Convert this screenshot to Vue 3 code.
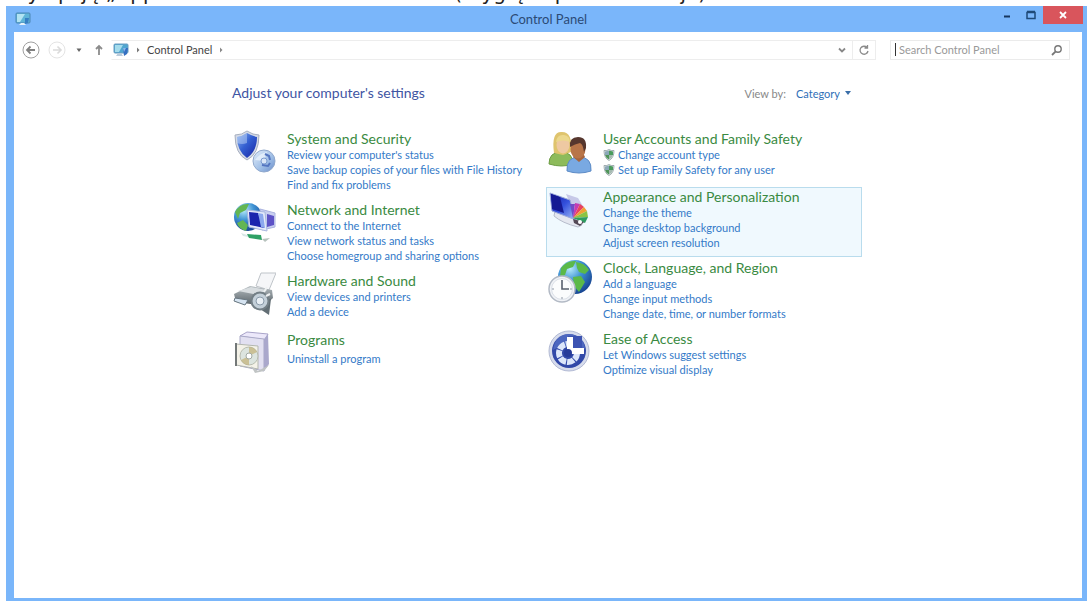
<script setup>
import { ref } from 'vue'

const query = ref('')
const view = ref('Category')

const columns = [
  [
    { icon: 'security', title: 'System and Security', links: ["Review your computer's status", 'Save backup copies of your files with File History', 'Find and fix problems'] },
    { icon: 'network', title: 'Network and Internet', links: ['Connect to the Internet', 'View network status and tasks', 'Choose homegroup and sharing options'] },
    { icon: 'hardware', title: 'Hardware and Sound', links: ['View devices and printers', 'Add a device'] },
    { icon: 'programs', title: 'Programs', links: ['Uninstall a program'] }
  ],
  [
    { icon: 'users', title: 'User Accounts and Family Safety', shield: true, links: ['Change account type', 'Set up Family Safety for any user'] },
    { icon: 'appearance', title: 'Appearance and Personalization', active: true, links: ['Change the theme', 'Change desktop background', 'Adjust screen resolution'] },
    { icon: 'clock', title: 'Clock, Language, and Region', links: ['Add a language', 'Change input methods', 'Change date, time, or number formats'] },
    { icon: 'ease', title: 'Ease of Access', links: ['Let Windows suggest settings', 'Optimize visual display'] }
  ]
]
</script>

<template>
  <div class="page">
    <svg class="defs" width="0" height="0" aria-hidden="true">
      <defs>
        <linearGradient id="gBlue" x1="0" y1="0" x2="1" y2="1">
          <stop offset="0" stop-color="#8fb4ee" /><stop offset=".45" stop-color="#3460d2" /><stop offset="1" stop-color="#1522a4" />
        </linearGradient>
        <radialGradient id="gGlobe" cx=".35" cy=".25" r=".8">
          <stop offset="0" stop-color="#b8ecfa" /><stop offset=".45" stop-color="#3f93d4" /><stop offset="1" stop-color="#15418f" />
        </radialGradient>
        <linearGradient id="gDisk" x1="0" y1="0" x2="1" y2="1">
          <stop offset="0" stop-color="#e6f0fb" /><stop offset=".6" stop-color="#9dbde6" /><stop offset="1" stop-color="#6a8cc8" />
        </linearGradient>
        <linearGradient id="gScreen" x1="0" y1="0" x2="1" y2="1">
          <stop offset="0" stop-color="#1018a0" /><stop offset=".5" stop-color="#3552dd" /><stop offset="1" stop-color="#a9c4f7" />
        </linearGradient>
        <linearGradient id="gGrey" x1="0" y1="0" x2="0" y2="1">
          <stop offset="0" stop-color="#b4bcc0" /><stop offset="1" stop-color="#566066" />
        </linearGradient>
      </defs>
    </svg>

    <p class="caption">my opcję „Appearance and Personalization” (Wygląd i personalizacja).</p>

    <div class="window">
      <header class="titlebar">
        <svg class="app-icon" viewBox="0 0 16 16" aria-hidden="true">
          <rect x="1" y="2" width="14" height="10" rx="1" fill="#5fb4d8" stroke="#4b86b4" />
          <path d="M2 3h8l-5 8H2z" fill="#b2e3f2" />
          <path d="M4 14h7l-2-2H6z" fill="#e6f2fa" />
          <path d="M10 7h4l-1 5-3 1z" fill="#377fc4" />
        </svg>
        <h1>Control Panel</h1>
        <div class="controls">
          <button type="button" aria-label="Minimize"><svg viewBox="0 0 12 12"><path d="M3 7.5h6" stroke="#17375e" stroke-width="2" /></svg></button>
          <button type="button" aria-label="Maximize"><svg viewBox="0 0 12 12"><path d="M2 3.5h8v6H2zM2 2.5h8" fill="none" stroke="#1f4a78" stroke-width="1.5" /></svg></button>
          <button type="button" class="close" aria-label="Close"><svg viewBox="0 0 12 12"><path d="M3 3l6 6M9 3l-6 6" stroke="#fff" stroke-width="1.8" /></svg></button>
        </div>
      </header>

      <div class="body">
        <nav class="navbar" aria-label="Location">
          <button type="button" class="round" aria-label="Back">
            <svg viewBox="0 0 18 18"><circle cx="9" cy="9" r="8" fill="#fff" stroke="#a0a0a0" /><path d="M5 9h8M8.5 5.5L5 9l3.5 3.5" fill="none" stroke="#808080" stroke-width="1.8" /></svg>
          </button>
          <button type="button" class="round" aria-label="Forward" disabled>
            <svg viewBox="0 0 18 18"><circle cx="9" cy="9" r="8" fill="#fff" stroke="#e4e4e4" /><path d="M5 9h8M9.5 5.5L13 9l-3.5 3.5" fill="none" stroke="#dadada" stroke-width="1.6" /></svg>
          </button>
          <button type="button" class="small" aria-label="Recent locations"><svg viewBox="0 0 8 8"><path d="M1.5 2.5h5L4 6z" fill="#666" /></svg></button>
          <button type="button" class="up" aria-label="Up"><svg viewBox="0 0 12 12"><path d="M6 11V2M3 5l3-3 3 3" fill="none" stroke="#8c8c8c" stroke-width="1.8" /></svg></button>
          <div class="address">
            <svg class="place" viewBox="0 0 16 16" aria-hidden="true">
              <rect x="1" y="2" width="14" height="9" rx="1" fill="#4fa6d0" stroke="#6a9cc0" />
              <path d="M2 3h8l-4 7H2z" fill="#a5dcec" />
              <path d="M3 14h7l-2-3H5z" fill="#b9cbdb" />
              <path d="M10 6h5l-1 6-3 2z" fill="#356fc0" /><path d="M10 6h3l-2 4z" fill="#8ab8ea" />
            </svg>
            <svg class="chev" viewBox="0 0 8 8" aria-hidden="true"><path d="M3 1.5L5.5 4 3 6.5z" fill="#777" /></svg>
            <a href="#">Control Panel</a>
            <svg class="chev" viewBox="0 0 8 8" aria-hidden="true"><path d="M3 1.5L5.5 4 3 6.5z" fill="#888" /></svg>
            <button type="button" class="drop" aria-label="Previous locations"><svg viewBox="0 0 12 12"><path d="M3 4.5l3 3 3-3" fill="none" stroke="#888" stroke-width="1.8" /></svg></button>
            <button type="button" class="refresh" aria-label="Refresh"><svg viewBox="0 0 12 12"><path d="M9 3.5A4 4 0 1 0 10 7M9.5 1v3H6.5" fill="none" stroke="#8b8b8b" stroke-width="1.3" /></svg></button>
          </div>
          <label class="search">
            <span class="caret" aria-hidden="true"></span>
            <input v-model="query" type="text" placeholder="Search Control Panel" aria-label="Search Control Panel" />
            <svg viewBox="0 0 12 12" aria-hidden="true"><circle cx="7" cy="5" r="3.2" fill="none" stroke="#777" stroke-width="1.4" /><path d="M4.7 7.3L1 11" stroke="#777" stroke-width="1.8" /></svg>
          </label>
        </nav>

        <main>
          <div class="heading">
            <h2>Adjust your computer's settings</h2>
            <label class="viewby">
              <span>View by:</span>
              <span class="pick">
                <select v-model="view">
                  <option>Category</option>
                  <option>Large icons</option>
                  <option>Small icons</option>
                </select>
                <svg viewBox="0 0 8 8" aria-hidden="true"><path d="M1 2h6L4 6z" fill="#3a6ea8" /></svg>
              </span>
            </label>
          </div>

          <div class="columns">
            <div v-for="(items, c) in columns" :key="c" class="column">
              <section v-for="item in items" :key="item.title" class="item" :class="{ active: item.active, single: item.links.length === 1 }">
                <svg class="icon" viewBox="0 0 44 44" aria-hidden="true">
                  <g v-if="item.icon === 'security'">
                    <path d="M3 5q7 0 12-4 6 4 12 4 0 19-12 25Q3 24 3 5z" fill="#d5dbe6" stroke="#a7afc0" />
                    <path d="M5 7q6-1 10-4 5 3 10 4 0 14-10 21Q5 21 5 7z" fill="url(#gBlue)" />
                    <path d="M5 7q6-1 10-4v10Q10 15 5 13z" fill="#b9d2f5" opacity=".5" />
                    <circle cx="32" cy="31" r="11" fill="url(#gDisk)" stroke="#91a9cd" />
                    <path d="M23 30q5-7 12-8l-3 9z" fill="#e8f2fd" opacity=".8" />
                    <circle cx="32" cy="31" r="3" fill="#d9e6f7" stroke="#7b9bd0" />
                    <path d="M33 24l4 2 1 4M30 35l6 1 2-3" fill="none" stroke="#5375c0" stroke-width="2" />
                  </g>
                  <g v-else-if="item.icon === 'network'">
                    <circle cx="16" cy="16" r="14" fill="url(#gGlobe)" />
                    <path d="M3 11Q8 2 17 3l-3 6-6 3-2 6zM5 22l6-3 5 5-2 6Q7 28 5 22z" fill="#63b653" />
                    <path d="M28 8l15 4v14l-13 3z" fill="#c9cff0" stroke="#aab3df" />
                    <path d="M35 13l7 2v9l-7 2z" fill="#5d52c6" />
                    <path d="M15 9l18 2 2 19-18-4z" fill="#e5eafa" stroke="#a8b7df" />
                    <path d="M17 11l9 1 6 15-14-3z" fill="#1a24ae" />
                    <path d="M26 12l5 1 2 14-4-1z" fill="#8ca8ee" />
                    <path d="M9 32q9 4 20 2l-3 4-15-3z" fill="#d8e7e6" />
                    <path d="M15 33l14 1 1 5-13-2z" fill="#2fa165" />
                    <path d="M30 38l8-1-5 4z" fill="#b7c2bd" />
                  </g>
                  <g v-else-if="item.icon === 'hardware'">
                    <path d="M24 14l5-13 15 0-7 17z" fill="#f5f6f8" stroke="#bfc4c9" />
                    <path d="M2 22l16-8 22 4 1 8-9 8-28-4z" fill="url(#gGrey)" />
                    <path d="M6 19l13-4 16 3-8 5z" fill="#d8dde0" />
                    <path d="M3 26l13 2-3 5-11-4z" fill="#d6e4f1" stroke="#687781" />
                    <path d="M19 31l18 12 2-16z" fill="#626e74" />
                    <circle cx="28" cy="29" r="8.5" fill="#c4d0d9" stroke="#737f86" stroke-width="2" />
                    <circle cx="28" cy="29" r="4" fill="#e9eff4" stroke="#899aa9" />
                    <path d="M32 20l3-5M34 24l4-2" stroke="#eef1f2" stroke-width="2" />
                  </g>
                  <g v-else-if="item.icon === 'programs'">
                    <path d="M8 5l7-4 21 2-3 6z" fill="#ece8fa" stroke="#a9a4c9" />
                    <path d="M8 5l24 3v32L8 35z" fill="#e2e0f1" stroke="#a9a9c7" />
                    <path d="M32 8l4-5 1 30-5 7z" fill="#aaa8cc" />
                    <path d="M4 13l22 2v23L4 34z" fill="#f4f2e8" stroke="#b3b6af" />
                    <path d="M4 12v23" stroke="#737878" stroke-width="2" />
                    <circle cx="17" cy="25" r="9" fill="#dce4df" stroke="#b8bcb0" />
                    <path d="M17 16a9 9 0 0 1 8 5l-8 4zM17 34a9 9 0 0 1-8-5l8-4z" fill="#c4b47d" opacity=".75" />
                    <circle cx="17" cy="25" r="3" fill="#fff" stroke="#a2aaa5" />
                    <path d="M19 35l7 5 11-6-5 6-9 2z" fill="#c0c4c4" />
                  </g>
                  <g v-else-if="item.icon === 'users'">
                    <path d="M1 34q0-12 12-12t12 12q-11 4-24 0z" fill="#8dbb5b" stroke="#6d9d45" />
                    <path d="M6 23q-3-22 8-21 11 0 9 20l-8 3z" fill="#dfc46e" />
                    <ellipse cx="15" cy="15" rx="6.5" ry="8.5" fill="#eec9a2" />
                    <path d="M8 12q1-8 8-7 6 1 6 7-7-3-14 0z" fill="#ecd88d" />
                    <path d="M19 41q-1-14 12-14t12 14q-12 4-24 0z" fill="#79a9e2" stroke="#5d8bc6" />
                    <path d="M25 27l6 5 6-5-2-4h-8z" fill="#a7653e" />
                    <ellipse cx="30" cy="19" rx="7.5" ry="9.5" fill="#b87549" />
                    <path d="M22 17q-1-10 8-10t8 11l-2 4q-1-8-4-9-5 1-10 4z" fill="#56372e" />
                  </g>
                  <g v-else-if="item.icon === 'appearance'">
                    <path d="M7 23q10-2 24 7l3 7-4 2Q14 35 6 28z" fill="#e5e8f0" stroke="#b7bccb" />
                    <path d="M18 6l12 4 6 10-14-5z" fill="#c6c9e8" />
                    <path d="M2 5l20 7 6 20-24-9z" fill="url(#gScreen)" stroke="#9ca9d8" />
                    <path d="M3 6l9 3 4 16-12-4z" fill="#151a93" />
                    <path d="M25 30l-3-14 5 0z" fill="#704bc6" />
                    <path d="M25 30l2-15 5 1z" fill="#c43cb2" />
                    <path d="M25 30l7-14 4 3z" fill="#e8435f" />
                    <path d="M25 30l11-11 3 4z" fill="#f0a034" />
                    <path d="M25 30l14-7 1 6z" fill="#8bc443" />
                    <path d="M25 30l15-1-3 6z" fill="#2f9c61" />
                    <path d="M25 31l11 3-4 4-6-3z" fill="#544956" /><circle cx="32" cy="34" r="2" fill="#fff" />
                  </g>
                  <g v-else-if="item.icon === 'clock'">
                    <circle cx="27" cy="18" r="17" fill="url(#gGlobe)" />
                    <path d="M13 9q6-8 15-7l-3 6-6 2-2 6-5 2zM28 3q9 1 13 8l-4 4-6-2-2-4zM25 18l8-1 4 6-6 10-5-6z" fill="#5bb948" />
                    <circle cx="14" cy="30" r="13" fill="#f1f3f7" stroke="#b3bac5" stroke-width="1.5" />
                    <circle cx="14" cy="30" r="10.5" fill="#fbfcfd" stroke="#dbe0e8" />
                    <path d="M14 21v9h7" fill="none" stroke="#58606e" stroke-width="1.6" />
                    <path d="M14 38v2M4 30h2M22 30h2" stroke="#8f98a6" />
                  </g>
                  <g v-else>
                    <circle cx="21" cy="21" r="20" fill="#d7dcec" stroke="#b2bad4" />
                    <circle cx="21" cy="21" r="17" fill="#3148a8" />
                    <path d="M5 20Q7 4 22 4q14 2 15 15Q20 11 5 20z" fill="#6a86d5" opacity=".5" />
                    <circle cx="20" cy="23" r="9" fill="none" stroke="#dce6fa" stroke-width="6" stroke-dasharray="7 1" />
                    <path d="M20 23V6h14v14z" fill="#3c53b2" />
                    <path d="M19 7h6v11h11v6H19z" fill="#fff" />
                    <circle cx="20" cy="23" r="4" fill="#263b99" />
                  </g>
                </svg>
                <div class="text">
                  <h3><a href="#">{{ item.title }}</a></h3>
                  <ul>
                    <li v-for="link in item.links" :key="link">
                      <svg v-if="item.shield" class="shield" viewBox="0 0 12 12" aria-hidden="true">
                        <path d="M1 1.5Q4 2 6 .5 8 2 11 1.5 11 9 6 11.5 1 9 1 1.5z" fill="#eef2f0" stroke="#8b9aa0" stroke-width=".8" />
                        <path d="M6 1.5V6H2V2.5z" fill="#8ba8b8" /><path d="M6 1.5V6h4V2.5z" fill="#4b9b5d" />
                        <path d="M2 6h4v4.5Q3 9 2 6z" fill="#4f9459" /><path d="M6 6h4Q9 9 6 10.5z" fill="#a4bab0" />
                      </svg>
                      <a href="#">{{ link }}</a>
                    </li>
                  </ul>
                </div>
              </section>
            </div>
          </div>
        </main>
      </div>
    </div>
  </div>
</template>

<style>
html, body { background: #fff; }
</style>

<style scoped>
* { box-sizing: border-box; }
.page {
  display: flex;
  flex-direction: column;
  min-height: 100vh;
  font-family: Lato, "Open Sans", sans-serif;
  font-size: 11px;
  color: #444;
}
h1, h2, h3, p, ul { margin: 0; padding: 0; font-weight: 400; }
ul { list-style: none; }
a { color: inherit; text-decoration: none; }
button {
  display: flex; align-items: center; justify-content: center;
  border: 0; padding: 0; background: none; flex: none;
}
svg { display: block; flex: none; }
.defs { position: absolute; }

.caption {
  display: flex;
  align-items: flex-end;
  height: 6px;
  padding-left: 8px;
  overflow: hidden;
  white-space: nowrap;
  font-family: "DejaVu Sans", sans-serif;
  font-size: 20px;
  line-height: 26px;
  color: #222;
}
.window {
  flex: 1;
  display: flex;
  flex-direction: column;
  margin-left: 6px;
  padding: 0 5px 3px 8px;
  background: #7ab6fa;
}
.titlebar {
  display: grid;
  grid-template-columns: 1fr auto 1fr;
  align-items: start;
  height: 26px;
  margin-right: -1px;
}
.app-icon { width: 16px; height: 16px; margin: 5px 0 0 1px; }
.titlebar h1 { font-size: 13px; line-height: 26px; color: #2b4a75; }
.controls { display: flex; justify-content: flex-end; }
.controls button { width: 24px; height: 18px; }
.controls svg { width: 12px; height: 12px; }
.controls .close { width: 40px; background: #d9555c; }

.body { flex: 1; background: #fff; }
.navbar { display: flex; align-items: center; padding: 7px 12px 0 8px; height: 28px; }
.round svg { width: 18px; height: 18px; }
.round + .round { margin-left: 8px; }
.small { width: 8px; margin-left: 9px; }
.small svg { width: 8px; height: 8px; }
.up { margin-left: 10px; }
.up svg { width: 12px; height: 12px; }
.address {
  flex: 1;
  display: flex;
  align-items: center;
  height: 20px;
  margin-left: 6px;
  border: 1px solid #ededed;
  border-left-color: transparent;
}
.place { width: 16px; height: 16px; margin: 0 5px 0 1px; }
.chev { width: 8px; height: 8px; }
.address a { margin: 0 5px; color: #444; }
.drop { width: 12px; margin: 0 4px 0 auto; }
.drop svg, .refresh svg { width: 12px; height: 12px; }
.refresh { width: 23px; height: 18px; border-left: 1px solid #ededed; }
.search {
  display: flex;
  align-items: center;
  width: 180px;
  height: 20px;
  margin-left: 14px;
  padding: 0 6px 0 4px;
  border: 1px solid #ebebeb;
}
.caret { width: 1px; height: 13px; background: #333; flex: none; }
.search input {
  flex: 1; min-width: 0; border: 0; padding: 0 0 0 3px; outline: 0;
  background: none; font: inherit; color: #555;
}
.search input::placeholder { color: #999; opacity: 1; }
.search svg { width: 12px; height: 12px; }

main { max-width: 636px; margin: 0 auto; padding: 23px 4px 0 0; }
.heading {
  display: flex;
  justify-content: space-between;
  align-items: center;
  height: 20px;
  padding: 0 10px 0 2px;
}
.heading h2 { font-size: 14px; line-height: 20px; color: #3f55a3; }
.viewby { display: flex; align-items: center; gap: 10px; color: #888; }
.pick { display: flex; align-items: center; gap: 4px; }
.pick select {
  appearance: none; border: 0; padding: 0; background: none;
  font: inherit; color: #2f6fb8; field-sizing: content;
}
.pick svg { width: 8px; height: 8px; }

.columns { display: grid; grid-template-columns: 1fr 1fr; margin-top: 26px; }
.column { display: flex; flex-direction: column; gap: 1px; }
.item {
  display: flex;
  align-items: flex-start;
  gap: 11px;
  min-height: 57px;
  padding: 0 1px 6px;
  border: 1px solid transparent;
}
.item.active { background: #f0f9fe; border-color: #b9dced; }
.item.single { padding-top: 1px; }
.icon { width: 44px; height: 44px; }
.text { min-width: 0; }
h3 { font-size: 14px; line-height: 17px; color: #3a8a42; white-space: nowrap; }
li { display: flex; align-items: center; gap: 3px; line-height: 15px; color: #347ac8; white-space: nowrap; }
.single ul { padding-top: 3px; }
.shield { width: 12px; height: 12px; }
</style>
